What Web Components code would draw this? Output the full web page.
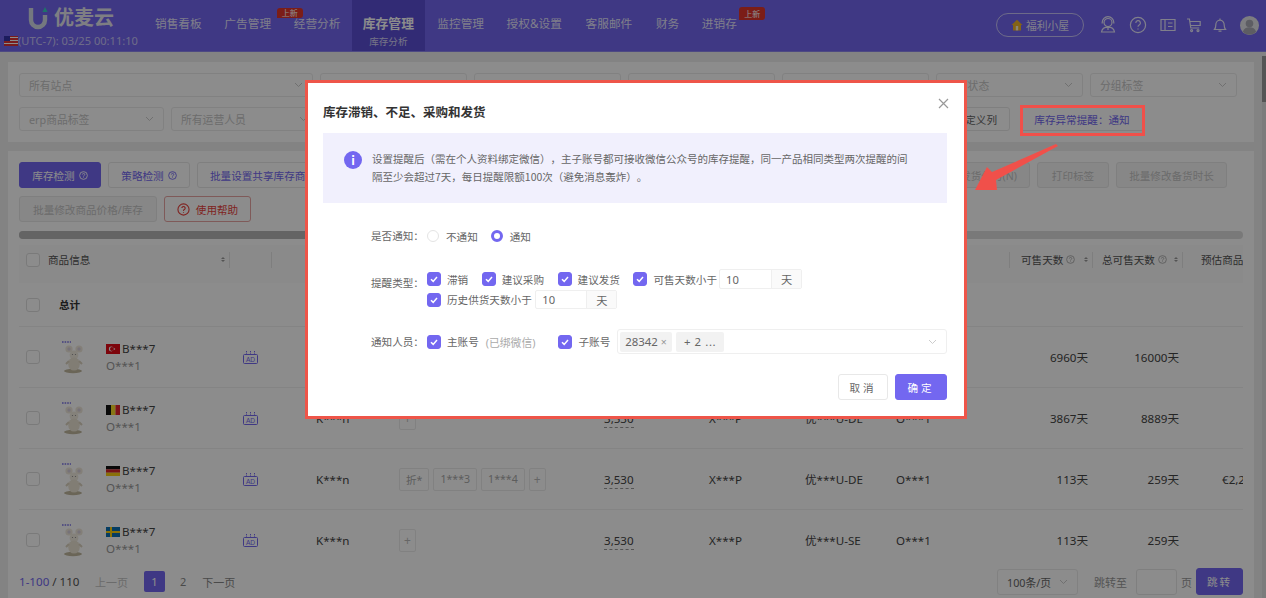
<!DOCTYPE html>
<html lang="zh">
<head>
<meta charset="utf-8">
<title>优麦云</title>
<style>
  html, body { margin: 0; height: 598px; overflow: hidden; background: #efefef; }
  body { font-family: "Noto Sans", "Noto Sans CJK SC", sans-serif; font-size: 11px; color: #444; }
</style>
</head>
<body>
<app-header></app-header>
<page-main>
  <filter-card></filter-card>
  <stock-card>
    <stock-row flag="tr" site="优***U-TR" days="6960天" total="16000天"></stock-row>
    <stock-row flag="be" site="优***U-DE" days="3867天" total="8889天"></stock-row>
    <stock-row flag="de" site="优***U-DE" days="113天" total="259天" price="€2,235" tags="折*,1***3,1***4"></stock-row>
    <stock-row flag="se" site="优***U-SE" days="113天" total="259天"></stock-row>
  </stock-card>
</page-main>
<modal-mask>
  <alert-modal></alert-modal>
</modal-mask>
<note-marks></note-marks>

<script>
// small parts first
class UiBtn extends HTMLElement {
    constructor() {
        super();
        this.attachShadow({ mode: 'open' }).innerHTML = `
            <style>
                :host { display: inline-flex; align-items: center; justify-content: center; gap: 4px; box-sizing: border-box;
                    height: 26px; padding: 0 12px; border: 1px solid #e8e8e8; border-radius: 3px; background: #fff;
                    color: #7367f0; font-size: 10.6px; white-space: nowrap; flex: none; }
                :host([kind=primary]) { background: #7367f0; border-color: #7367f0; color: #fff; }
                :host([kind=off]) { background: #f6f6f6; color: #c4c4c4; }
                :host([kind=danger]) { color: #e8413c; border-color: #e8a5a3; }
                :host([kind=plain]) { color: #666; }
            </style>
            <slot></slot>`;
    }
}
customElements.define('ui-btn', UiBtn);

class TipMark extends HTMLElement {
    constructor() {
        super();
        this.attachShadow({ mode: 'open' }).innerHTML = `
            <style>:host { display: inline-flex; flex: none; } svg { display: block; }</style>
            <svg width="9" height="9" viewBox="0 0 10 10" fill="none" stroke="currentColor" stroke-width="1">
                <circle cx="5" cy="5" r="4.3"/><path d="M3.8 3.9a1.3 1.3 0 1 1 1.9 1.2c-.5.3-.7.5-.7 1M5 7.2v.6"/>
            </svg>`;
    }
}
customElements.define('tip-mark', TipMark);

class UiSelect extends HTMLElement {
    constructor() {
        super();
        this.attachShadow({ mode: 'open' }).innerHTML = `
            <style>
                :host { display: flex; align-items: center; justify-content: space-between; box-sizing: border-box; flex: none;
                    height: 24px; padding: 0 9px; border: 1px solid #ebebeb; border-radius: 3px; background: #fff;
                    color: #c6c6c6; font-size: 10.8px; white-space: nowrap; }
                svg { display: block; flex: none; }
            </style>
            <slot></slot>
            <svg width="9" height="6" viewBox="0 0 9 6" fill="none" stroke="#ccc" stroke-width="1"><path d="M1 1l3.500 3.500L8 1"/></svg>`;
    }
}
customElements.define('ui-select', UiSelect);

class UiCheck extends HTMLElement {
    constructor() {
        super();
        this.attachShadow({ mode: 'open' }).innerHTML = `
            <style>
                :host { display: inline-flex; align-items: center; gap: 6px; white-space: nowrap; color: inherit; }
                i { display: flex; align-items: center; justify-content: center; box-sizing: border-box; flex: none;
                    width: 14px; height: 14px; border: 1px solid #dedede; border-radius: 3px; background: #fff; }
                :host([on]) i { background: #7367f0; border-color: #7367f0; }
                svg { display: none; }
                :host([on]) svg { display: block; }
            </style>
            <i><svg width="10" height="10" viewBox="0 0 10 10" fill="none" stroke="#fff" stroke-width="1.500"><path d="M2 5.200l2.200 2.200L8 3"/></svg></i>
            <slot></slot>`;
    }
}
customElements.define('ui-check', UiCheck);

class UiRadio extends HTMLElement {
    constructor() {
        super();
        this.attachShadow({ mode: 'open' }).innerHTML = `
            <style>
                :host { display: inline-flex; align-items: center; gap: 7px; white-space: nowrap; }
                i { box-sizing: border-box; width: 12px; height: 12px; border: 1px solid #e4e4e4; border-radius: 50%; background: #fff; flex: none; }
                :host([on]) i { border: 3.500px solid #7367f0; }
            </style>
            <i></i><slot></slot>`;
    }
}
customElements.define('ui-radio', UiRadio);

class NumUnit extends HTMLElement {
    connectedCallback() {
        this.attachShadow({ mode: 'open' }).innerHTML = `
            <style>
                :host { display: inline-flex; height: ${this.getAttribute('h') || 20}px; box-sizing: border-box;
                    border: 1px solid #efefef; border-radius: 2px; font-size: 11.2px; color: #666; }
                b { font-weight: 400; display: flex; align-items: center; width: ${this.getAttribute('w') || 51}px; padding-left: 6px; box-sizing: border-box; }
                span { display: flex; align-items: center; justify-content: center; width: 29px; background: #fafafa; border-left: 1px solid #efefef; }
            </style>
            <b>10</b><span>天</span>`;
    }
}
customElements.define('num-unit', NumUnit);

class SiteFlag extends HTMLElement {
    connectedCallback() {
        const flags = {
            us: '<rect width="14" height="10" fill="#d33"/><path d="M0 1.500h14M0 4.500h14M0 7.500h14" stroke="#fff"/><rect width="6" height="5" fill="#33a"/>',
            tr: '<rect width="14" height="10" fill="#e30a17"/><circle cx="5.200" cy="5" r="2.400" fill="#fff"/><circle cx="5.900" cy="5" r="1.900" fill="#e30a17"/><circle cx="8.400" cy="5" r=".8" fill="#fff"/>',
            be: '<rect width="5" height="10" fill="#111"/><rect x="5" width="4.500" height="10" fill="#f8d92b"/><rect x="9.500" width="4.500" height="10" fill="#e3212f"/>',
            de: '<rect width="14" height="3.400" fill="#111"/><rect y="3.400" width="14" height="3.300" fill="#d8232a"/><rect y="6.700" width="14" height="3.300" fill="#fbcd12"/>',
            se: '<rect width="14" height="10" fill="#0a6fb5"/><path d="M5 0v10M0 5h14" stroke="#fcce0c" stroke-width="2"/>'
        };
        this.attachShadow({ mode: 'open' }).innerHTML = `
            <style>:host { display: inline-flex; flex: none; } svg { display: block; }</style>
            <svg width="14" height="10" viewBox="0 0 14 10">${flags[this.getAttribute('code')] || ''}</svg>`;
    }
}
customElements.define('site-flag', SiteFlag);

class PlushThumb extends HTMLElement {
    constructor() {
        super();
        this.attachShadow({ mode: 'open' }).innerHTML = `
            <style>:host { display: inline-flex; flex: none; } svg { display: block; }</style>
            <svg width="24" height="34" viewBox="0 0 24 34">
                <path d="M1 2h9" stroke="#7a72e8" stroke-width="1.400" stroke-dasharray="1.600 1"/>
                <ellipse cx="12" cy="31" rx="9" ry="2.200" fill="#c2b89e"/>
                <circle cx="8" cy="9" r="3.600" fill="#efe8da"/><circle cx="18" cy="9" r="3.600" fill="#efe8da"/>
                <circle cx="8" cy="9" r="1.700" fill="#d8d0dc"/><circle cx="18" cy="9" r="1.700" fill="#d8d0dc"/>
                <ellipse cx="13" cy="15" rx="4.400" ry="4.600" fill="#f1ebdf"/>
                <ellipse cx="13" cy="24" rx="5.800" ry="6.600" fill="#ebe3d3"/>
                <path d="M8 21l-3 3M18 21l3 3" stroke="#dcd3c0" stroke-width="2"/>
                <circle cx="11.500" cy="14.500" r=".6" fill="#888"/><circle cx="14.500" cy="14.500" r=".6" fill="#888"/>
            </svg>`;
    }
}
customElements.define('plush-thumb', PlushThumb);

class AdMark extends HTMLElement {
    constructor() {
        super();
        this.attachShadow({ mode: 'open' }).innerHTML = `
            <style>:host { display: inline-flex; flex: none; } svg { display: block; }</style>
            <svg width="15" height="13" viewBox="0 0 15 13" fill="none" stroke="#7367f0" stroke-width="1">
                <rect x=".5" y="3.500" width="14" height="9" rx="1"/>
                <path d="M3.500 0v3M7.500 0v3M11.500 0v3" stroke-dasharray="1 .6"/>
                <text x="7.500" y="10.600" text-anchor="middle" font-size="6.600" font-family="Liberation Sans" fill="#7367f0" stroke="none">AD</text>
            </svg>`;
    }
}
customElements.define('ad-mark', AdMark);

// header
class NavItem extends HTMLElement {
    connectedCallback() {
        const badge = this.getAttribute('badge');
        const sub = this.getAttribute('sub');
        this.attachShadow({ mode: 'open' }).innerHTML = `
            <style>
                :host { position: relative; display: flex; flex-direction: column; align-items: center; justify-content: center; box-sizing: border-box;
                    height: 51px; padding: 0 11.300px 7px; font-size: 11.700px; color: rgba(255,255,255,.84); white-space: nowrap; flex: none; }
                :host([active]) { background: #5c4fd6; font-size: 12.800px; font-weight: 700; color: #fff; padding: 9px 11px 0; }
                .sub { font-size: 9.600px; font-weight: 400; opacity: .75; margin-top: 2px; }
                .badge { position: absolute; left: calc(100% - 9px - var(--bx, 0px)); top: var(--by, 8px); padding: 0 5px; line-height: var(--bh, 10px);
                    font-size: 8px; background: #e0352b; color: #fff; border-radius: 3px 3px 3px 0; font-weight: 400; }
            </style>
            <slot></slot>
            ${sub ? `<div class="sub">${sub}</div>` : ''}
            ${badge ? `<div class="badge">${badge}</div>` : ''}`;
    }
}
customElements.define('nav-item', NavItem);

class AppHeader extends HTMLElement {
    constructor() {
        super();
        this.attachShadow({ mode: 'open' }).innerHTML = `
            <style>
                :host { display: flex; align-items: flex-start; height: 51px; background: #7367f0; color: #fff; box-sizing: content-box; border-bottom: 1px solid #8d85ef; }
                .brand { width: 143.700px; flex: none; padding-left: 4px; box-sizing: border-box; }
                .logo { display: flex; align-items: center; gap: 6px; height: 30px; margin: 3px 0 0 24px; font-size: 20px; font-weight: 700; line-height: 1; color: #e6e6ee; }
                .logo svg { display: block; }
                .time { display: flex; align-items: center; gap: 0; font-size: 11.100px; color: rgba(255,255,255,.62); white-space: nowrap; }
                nav { display: flex; flex: none; }
                .tools { margin-left: auto; display: flex; align-items: center; height: 50px; padding-right: 7px; }
                .house { display: flex; align-items: center; justify-content: center; gap: 3px; box-sizing: border-box; width: 88px; height: 24px; border: 1px solid rgba(255,255,255,.6);
                    border-radius: 12px; font-size: 10.800px; color: rgba(255,255,255,.85); margin-right: 15px; }
                .tools svg { display: block; }
                .ic { display: flex; justify-content: center; fill: none; stroke: rgba(255,255,255,.85); stroke-width: 1.200; }
            </style>
            <div class="brand">
                <div class="logo">
                    <svg width="20" height="24" viewBox="0 0 20 24">
                        <path d="M3 2v12a7 7 0 0 0 14 0V9" fill="none" stroke="#d4dbe8" stroke-width="4.400"/>
                        <path d="M17 1l2.600 5h-5.200z" fill="#38cfc0"/>
                    </svg>
                    <span>优麦云</span>
                </div>
                <div class="time"><site-flag code="us"></site-flag><span>(UTC-7): 03/25 00:11:10</span></div>
            </div>
            <nav>
                <nav-item>销售看板</nav-item>
                <nav-item>广告管理</nav-item>
                <nav-item badge="上新" style="--bx:66px;--by:8px">经营分析</nav-item>
                <nav-item active sub="库存分析">库存管理</nav-item>
                <nav-item style="margin-left:1px">监控管理</nav-item>
                <nav-item>授权&amp;设置</nav-item>
                <nav-item style="margin-left:1px">客服邮件</nav-item>
                <nav-item style="margin-left:1px">财务</nav-item>
                <nav-item badge="上新" style="--bx:0px;--by:7px;--bh:13px">进销存</nav-item>
            </nav>
            <div class="tools">
                <div class="house">
                    <svg width="12" height="12" viewBox="0 0 12 12"><path d="M6 .8L11.400 6H10v5.400H2V6H.6z" fill="#f0b429"/><rect x="4.800" y="7" width="2.400" height="4.400" fill="#fff3d0"/></svg>
                    <span>福利小屋</span>
                </div>
                <svg class="ic" width="18" height="18" viewBox="0 0 18 18"><circle cx="9" cy="6.500" r="4"/><path d="M3.200 7.500v-1a5.800 5.800 0 0 1 11.600 0v1M2.500 16c.5-3 3-4.800 6.500-4.800s6 1.800 6.500 4.800zM9 11v3"/></svg>
                <svg class="ic" width="18" height="18" viewBox="0 0 18 18" style="margin-left:12px"><circle cx="9" cy="9" r="7.600"/><path d="M6.800 7a2.300 2.300 0 1 1 3.400 2c-.8.5-1.200.9-1.200 1.800M9 12.600v1"/></svg>
                <svg class="ic" width="16" height="16" viewBox="0 0 16 16" style="margin-left:13px"><path d="M1 2.500h14v11H1zM5 2.500v11M8 6h4.500M8 9.500h4.500"/></svg>
                <svg class="ic" width="16" height="16" viewBox="0 0 16 16" style="margin-left:10px"><path d="M1 2h2.400l1.400 9h8.400M4 4.500h10.200V8.500H4.500"/><circle cx="5.600" cy="13.600" r="1"/><circle cx="12" cy="13.600" r="1"/></svg>
                <svg class="ic" width="16" height="16" viewBox="0 0 16 16" style="margin-left:10px"><path d="M2.500 12.500c1-1.200 1.300-2 1.300-4.500 0-2.700 1.700-4.800 4.200-4.800s4.200 2.100 4.200 4.800c0 2.500.3 3.300 1.300 4.500zM8 3.200V1.500M6.500 14.200h3"/></svg>
                <svg width="19" height="19" viewBox="0 0 19 19" style="margin-left:12px"><circle cx="9.500" cy="9.500" r="9.500" fill="#e4e4ea"/><circle cx="9.500" cy="7.500" r="3.800" fill="#a9a9b4"/><path d="M2.800 16c1-3.400 3.500-4.800 6.700-4.800s5.700 1.400 6.700 4.800a9.500 9.500 0 0 1-13.400 0z" fill="#a9a9b4"/></svg>
            </div>`;
    }
}
customElements.define('app-header', AppHeader);

class PageMain extends HTMLElement {
    constructor() {
        super();
        this.attachShadow({ mode: 'open' }).innerHTML = `
            <style>
                :host { display: flex; flex-direction: column; gap: 9px; padding: 10px 12px 0 8px; }
            </style>
            <slot></slot>`;
    }
}
customElements.define('page-main', PageMain);

// filters
class FilterCard extends HTMLElement {
    constructor() {
        super();
        this.attachShadow({ mode: 'open' }).innerHTML = `
            <style>
                :host { display: flex; flex-direction: column; gap: 10px; height: 80px; box-sizing: border-box; padding: 11px 11px 0; background: #fff; }
                .row { display: flex; gap: 7px; align-items: center; }
                .push { margin-left: auto; }
                ui-select { width: 147px; }
                ui-btn { height: 24px; }
                ui-btn.alert { width: 124px; margin: 0 99px 0 3px; padding: 0; }
            </style>
            <div class="row">
                <ui-select style="width:294px">所有站点</ui-select>
                <ui-select>所有店铺</ui-select>
                <ui-select>所有品牌</ui-select>
                <ui-select>所有类目</ui-select>
                <ui-select>所有产品线</ui-select>
                <ui-select>所有状态</ui-select>
                <ui-select>分组标签</ui-select>
            </div>
            <div class="row">
                <ui-select style="width:145px">erp商品标签</ui-select>
                <ui-select>所有运营人员</ui-select>
                <ui-btn class="push" kind="plain">自定义列</ui-btn>
                <ui-btn class="alert">库存异常提醒：通知</ui-btn>
            </div>`;
    }
}
customElements.define('filter-card', FilterCard);

// table
class StockRow extends HTMLElement {
    connectedCallback() {
        const tags = (this.getAttribute('tags') || '').split(',').filter(Boolean);
        const chips = tags.map(t => `<i>${t}</i>`).join('') + '<i class="add">+</i>';
        const price = this.getAttribute('price');
        this.attachShadow({ mode: 'open' }).innerHTML = `
            <style>
                :host { display: grid; grid-template-columns: var(--cols); box-sizing: border-box; height: 61px; align-items: center; border-bottom: 1px solid #f1f1f1; font-size: 11.600px; color: #444; white-space: nowrap; }
                .info { display: flex; align-items: center; padding-left: 7px; }
                .who { margin-left: 21px; line-height: 17px; }
                .who div { display: flex; align-items: center; gap: 2px; }
                .who .sub { color: #999; }
                .ad { display: flex; justify-content: center; }
                .pad { padding-left: 45px; }
                .chips { display: flex; gap: 4px; padding-left: 9px; }
                .chips i { font-style: normal; display: flex; align-items: center; height: 21px; padding: 0 6px; border: 1px solid #ececec; border-radius: 2px; color: #aaa; font-size: 10.600px; }
                .chips i.add { padding: 0 4px; color: #bbb; font-size: 12px; }
                .stock { padding-left: 8px; }
                .stock span { border-bottom: 1px dashed #999; padding-bottom: 1px; }
                .cell { padding-left: 8px; }
                .num { text-align: right; }
                .num.a { padding-right: 4px; }
                .num.b { padding-right: 3px; }
                .price { padding-left: 40px; overflow: hidden; }
            </style>
            <div class="info">
                <ui-check></ui-check>
                <plush-thumb style="margin-left:21px"></plush-thumb>
                <div class="who">
                    <div><site-flag code="${this.getAttribute('flag')}"></site-flag><span>B***7</span></div>
                    <div class="sub">O***1</div>
                </div>
            </div>
            <div class="ad"><ad-mark></ad-mark></div>
            <div class="pad">K***n</div>
            <div class="chips">${chips}</div>
            <div class="stock"><span>3,530</span></div>
            <div class="cell">X***P</div>
            <div class="cell">${this.getAttribute('site')}</div>
            <div class="cell">O***1</div>
            <div class="num a">${this.getAttribute('days')}</div>
            <div class="num b">${this.getAttribute('total')}</div>
            <div class="price">${price || ''}</div>`;
    }
}
customElements.define('stock-row', StockRow);

class PagerBar extends HTMLElement {
    constructor() {
        super();
        this.attachShadow({ mode: 'open' }).innerHTML = `
            <style>
                :host { display: flex; align-items: center; height: 27px; margin-top: -3px; font-size: 11px; color: #555; white-space: nowrap; position: relative; background: #fff; }
                .count { width: 66px; font-size: 11.600px; flex: none; }
                .count em { font-style: normal; color: #7367f0; }
                .off { color: #c4c4c4; margin-left: 10px; }
                .cur { display: flex; align-items: center; justify-content: center; width: 21px; height: 21px; margin-left: 16px; border-radius: 2px; background: #7367f0; color: #fff; }
                .two { margin-left: 15px; color: #888; }
                .next { margin-left: 16px; color: #888; }
                .right { margin-left: auto; display: flex; align-items: center; }
                ui-select { width: 81px; height: 26px; color: #666; }
                .jump { margin-left: 16px; color: #999; }
                .box { width: 41px; height: 26px; box-sizing: border-box; margin-left: 9px; border: 1px solid #e8e8e8; border-radius: 3px; background: #fff; }
                .page { margin-left: 4px; color: #999; }
                ui-btn { width: 47px; height: 27px; margin-left: 4px; padding: 0; letter-spacing: 2px; }
            </style>
            <span class="count"><em>1-100</em> / 110</span>
            <span class="off">上一页</span>
            <span class="cur">1</span>
            <span class="two">2</span>
            <span class="next">下一页</span>
            <div class="right">
                <ui-select>100条/页</ui-select>
                <span class="jump">跳转至</span>
                <span class="box"></span>
                <span class="page">页</span>
                <ui-btn kind="primary">跳转</ui-btn>
            </div>`;
    }
}
customElements.define('pager-bar', PagerBar);

class StockCard extends HTMLElement {
    constructor() {
        super();
        this.attachShadow({ mode: 'open' }).innerHTML = `
            <style>
                :host { display: block; box-sizing: border-box; height: 460px; padding: 11px 11px 0;
                    background: #fff; overflow: hidden; --cols: 210px 42px 119px 206px 105px 96px 91px 121px 83px 90px 61px; }
                .bar { display: flex; gap: 7px; height: 26px; margin-bottom: 8px; }
                .push { margin-left: auto; }
                .track { height: 7px; margin-top: 9px; padding-bottom: 1px; background: #dcdcdc; border-radius: 4px; }
                .thumb { height: 8px; width: 470px; background: #b6b6b6; border-radius: 4px; }
                .head { display: grid; grid-template-columns: var(--cols); box-sizing: border-box; height: 38px; padding-bottom: 9px; margin-top: 6px; align-items: center; background: #fbfbfb; font-size: 10.600px; color: #555; white-space: nowrap; overflow: hidden; }
                .th { display: flex; align-items: center; gap: 3px; height: 16px; border-left: 1px solid #e6e6e6; padding-left: 11px; }
                .th.first { border: 0; padding-left: 7px; gap: 8px; }
                .th .sort { margin-left: auto; margin-right: 4px; }
                .th.plain { padding: 0; border: 0; }
                .th.long { padding-left: 9px; }
                .th tip-mark { color: #aaa; }
                .sort { display: flex; flex-direction: column; gap: 1px; }
                .sort i { width: 0; height: 0; border: 2.600px solid transparent; }
                .sort i:first-child { border-bottom-color: #999; border-top: 0; }
                .sort i:last-child { border-top-color: #999; border-bottom: 0; }
                .total { display: flex; align-items: center; box-sizing: border-box; height: 44px; padding-left: 7px; gap: 19px; font-size: 10.600px; font-weight: 700; color: #333; border-bottom: 1px solid #f1f1f1; }
            </style>
            <div class="bar">
                <ui-btn kind="primary" style="width:82px;padding:0">库存检测 <tip-mark></tip-mark></ui-btn>
                <ui-btn style="width:82px;padding:0">策略检测 <tip-mark></tip-mark></ui-btn>
                <ui-btn>批量设置共享库存商品</ui-btn>
                <ui-btn class="push" kind="off">创建发货任务(N)</ui-btn>
                <ui-btn kind="off" style="width:72px;padding:0">打印标签</ui-btn>
                <ui-btn kind="off" style="width:111px;padding:0;margin-right:16px">批量修改备货时长</ui-btn>
            </div>
            <div class="bar" style="margin:0">
                <ui-btn kind="off" style="width:138px;padding:0">批量修改商品价格/库存</ui-btn>
                <ui-btn kind="danger" style="width:87px;padding:0;gap:6px">
                    <svg width="13" height="13" viewBox="0 0 14 14" fill="none" stroke="#e8413c" stroke-width="1.200" style="display:block"><circle cx="7" cy="7" r="6"/><path d="M5.200 5.500a1.800 1.800 0 1 1 2.700 1.600c-.7.4-.9.7-.9 1.400M7 10v.8"/></svg>
                    使用帮助
                </ui-btn>
            </div>
            <div class="track"><div class="thumb"></div></div>
            <div class="head">
                <div class="th first"><ui-check></ui-check><span>商品信息</span><span class="sort"><i></i><i></i></span></div>
                <div class="th"></div>
                <div class="th"></div>
                <div class="th plain"></div><div class="th plain"></div><div class="th plain"></div><div class="th plain"></div><div class="th plain"></div>
                <div class="th">可售天数 <tip-mark></tip-mark><span class="sort"><i></i><i></i></span></div>
                <div class="th long">总可售天数 <tip-mark></tip-mark><span class="sort"><i></i><i></i></span></div>
                <div class="th" style="padding-left:18px">预估商品</div>
            </div>
            <div class="total"><ui-check></ui-check><span>总计</span></div>
            <slot></slot>
            <pager-bar></pager-bar>`;
    }
}
customElements.define('stock-card', StockCard);

// dialog
class ModalMask extends HTMLElement {
    constructor() {
        super();
        this.attachShadow({ mode: 'open' }).innerHTML = `
            <style>
                :host { position: fixed; inset: 0; display: flex; justify-content: center; align-items: flex-start; padding: 80px 0 0 6px;
                    box-sizing: border-box; background: rgba(0,0,0,.45); }
            </style>
            <slot></slot>`;
    }
}
customElements.define('modal-mask', ModalMask);

class AlertModal extends HTMLElement {
    constructor() {
        super();
        this.attachShadow({ mode: 'open' }).innerHTML = `
            <style>
                :host { position: relative; display: block; box-sizing: border-box; width: 662px; height: 339px; padding: 0 17px 0 15px;
                    background: #fff; border: 3px solid #ee5549; color: #666; font-size: 10.600px; }
                h2 { margin: 20px 0 10px; font-size: 12.500px; line-height: 20px; font-weight: 700; color: #333; }
                .close { position: absolute; right: 15px; top: 15px; display: block; }
                .info { display: flex; gap: 10px; height: 70px; box-sizing: border-box; padding: 17px 0 0 21px; background: #f1f0fd; font-family: "Noto Sans CJK SC", sans-serif; font-size: 10.500px; line-height: 18px; white-space: nowrap; text-spacing-trim: space-all; }
                .dot { display: flex; align-items: center; justify-content: center; width: 18px; height: 18px; border-radius: 50%; background: #7367f0; color: #fff; font-size: 12px; font-weight: 700; flex: none; margin-top: 1px; }
                .form { padding-left: 48px; }
                .field { display: flex; }
                .field > label { width: 56px; flex: none; white-space: nowrap; line-height: 20px; }
                .one { height: 20px; margin-top: 23px; align-items: center; gap: 0; }
                .one ui-radio + ui-radio { margin-left: 13px; }
                .two { margin-top: 23px; height: 40px; }
                .two > label { padding-top: 4px; }
                .lines { display: flex; flex-direction: column; gap: 1px; }
                .line { display: flex; align-items: center; gap: 13.500px; height: 20px; }
                .line.tight { height: 19px; }
                .line num-unit { margin-left: -11.500px; }
                .line.tight num-unit { margin-left: -10px; }
                .three { margin-top: 20px; height: 25px; align-items: center; }
                .three em { font-style: normal; color: #aaa; margin-left: 1px; font-size: 10.800px; }
                .three .mainchk { margin-right: 23px; }
                .three .sub { margin-right: 7px; }
                ui-select { width: 330px; height: 25px; padding: 0 9px 0 2px; color: #666; border-color: #efefef; }
                .tags { display: flex; gap: 4px; }
                .tags i { font-style: normal; display: flex; align-items: center; gap: 3px; height: 20px; padding: 0 5px; background: #f2f2f2; border-radius: 2px; font-size: 11.400px; }
                .tags i + i { padding: 0 8px; letter-spacing: .6px; }
                .tags small { font-size: 10.600px; color: #999; }
                .foot { display: flex; justify-content: flex-end; gap: 7px; margin-top: 20px; }
                .foot ui-btn { width: 50px; padding: 0; letter-spacing: 3px; }
                .foot ui-btn + ui-btn { width: 52px; }
            </style>
            <svg class="close" width="11" height="11" viewBox="0 0 11 11" stroke="#999" stroke-width="1.200"><path d="M1 1l9 9M10 1l-9 9"/></svg>
            <h2>库存滞销、不足、采购和发货</h2>
            <div class="info">
                <span class="dot">i</span>
                <div>设置提醒后（需在个人资料绑定微信），主子账号都可接收微信公众号的库存提醒，同一产品相同类型两次提醒的间<br>隔至少会超过7天，每日提醒限额100次（避免消息轰炸）。</div>
            </div>
            <div class="form">
                <div class="field one">
                    <label>是否通知：</label>
                    <ui-radio>不通知</ui-radio>
                    <ui-radio on>通知</ui-radio>
                </div>
                <div class="field two">
                    <label>提醒类型：</label>
                    <div class="lines">
                        <div class="line">
                            <ui-check on>滞销</ui-check>
                            <ui-check on>建议采购</ui-check>
                            <ui-check on>建议发货</ui-check>
                            <ui-check on>可售天数小于</ui-check>
                            <num-unit></num-unit>
                        </div>
                        <div class="line tight">
                            <ui-check on>历史供货天数小于</ui-check>
                            <num-unit w="50" h="19"></num-unit>
                        </div>
                    </div>
                </div>
                <div class="field three">
                    <label>通知人员：</label>
                    <ui-check on class="mainchk">主账号 <em>(已绑微信)</em></ui-check>
                    <ui-check on class="sub">子账号</ui-check>
                    <ui-select><span class="tags"><i>28342 <small>×</small></i><i>+ 2 ...</i></span></ui-select>
                </div>
            </div>
            <div class="foot">
                <ui-btn kind="plain">取消</ui-btn>
                <ui-btn kind="primary">确定</ui-btn>
            </div>`;
    }
}
customElements.define('alert-modal', AlertModal);

// red marks painted over the screenshot
class NoteMarks extends HTMLElement {
    constructor() {
        super();
        this.attachShadow({ mode: 'open' }).innerHTML = `
            <style>:host { position: fixed; inset: 0; pointer-events: none; } svg { display: block; }</style>
            <svg width="1266" height="598" viewBox="0 0 1266 598">
                <rect x="1021.500" y="106.500" width="122" height="28" fill="none" stroke="#f0504a" stroke-width="3"/>
                <path d="M1056 144L1058 146L996 180L997 190L975 190L987 167L992 172Z" fill="#f0504a"/>
                <rect x="1262" y="56" width="4" height="542" fill="#7c7c7c"/>
                <rect x="1262" y="56" width="4" height="46" fill="#555"/>
            </svg>`;
    }
}
customElements.define('note-marks', NoteMarks);
</script>
</body>
</html>
